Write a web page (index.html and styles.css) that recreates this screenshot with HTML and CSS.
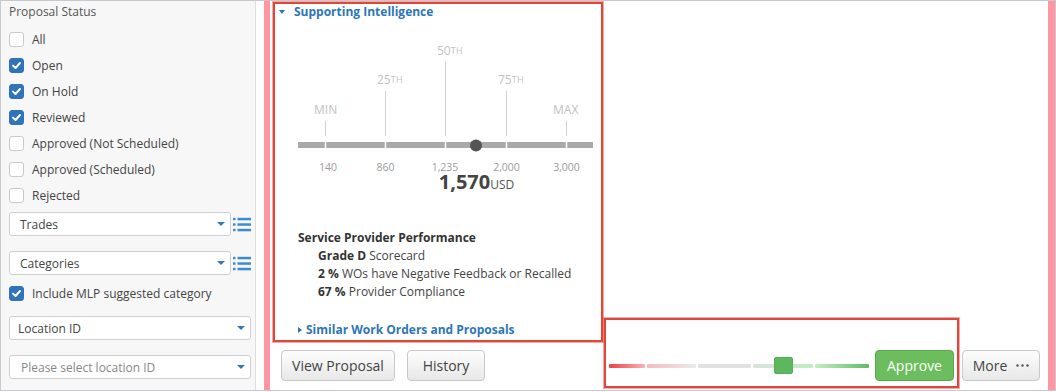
FILE: index.html
```html
<!DOCTYPE html>
<html lang="en">
<head>
  <meta charset="UTF-8">
  <meta name="viewport" content="width=device-width, initial-scale=1.0">
  <title>Proposal Review</title>
  <link rel="stylesheet" href="styles.css">
</head>
<body>
  <div class="frame">
    <aside class="sidebar">
      <div class="filter-title">Proposal Status</div>
      <ul class="check-list">
        <li class="check-row"><span class="box"></span>All</li>
        <li class="check-row"><span class="box checked"><svg viewBox="0 0 11 11"><path d="M2 5.6 4.5 8 9 3"/></svg></span>Open</li>
        <li class="check-row"><span class="box checked"><svg viewBox="0 0 11 11"><path d="M2 5.6 4.5 8 9 3"/></svg></span>On Hold</li>
        <li class="check-row"><span class="box checked"><svg viewBox="0 0 11 11"><path d="M2 5.6 4.5 8 9 3"/></svg></span>Reviewed</li>
        <li class="check-row"><span class="box"></span>Approved (Not Scheduled)</li>
        <li class="check-row"><span class="box"></span>Approved (Scheduled)</li>
        <li class="check-row"><span class="box"></span>Rejected</li>
      </ul>

      <div class="select-row first">
        <div class="select"><span>Trades</span><i class="caret"></i></div>
        <svg class="list-icon" viewBox="0 0 18 15">
          <rect x="0" y="0.8" width="2.5" height="2.5" rx="0.6"/><rect x="4.5" y="0.8" width="13.5" height="2.5"/>
          <rect x="0" y="6.3" width="2.5" height="2.5" rx="0.6"/><rect x="4.5" y="6.3" width="13.5" height="2.5"/>
          <rect x="0" y="11.8" width="2.5" height="2.5" rx="0.6"/><rect x="4.5" y="11.8" width="13.5" height="2.5"/>
        </svg>
      </div>
      <div class="select-row">
        <div class="select"><span>Categories</span><i class="caret"></i></div>
        <svg class="list-icon" viewBox="0 0 18 15">
          <rect x="0" y="0.8" width="2.5" height="2.5" rx="0.6"/><rect x="4.5" y="0.8" width="13.5" height="2.5"/>
          <rect x="0" y="6.3" width="2.5" height="2.5" rx="0.6"/><rect x="4.5" y="6.3" width="13.5" height="2.5"/>
          <rect x="0" y="11.8" width="2.5" height="2.5" rx="0.6"/><rect x="4.5" y="11.8" width="13.5" height="2.5"/>
        </svg>
      </div>
      <div class="check-row mlp"><span class="box checked"><svg viewBox="0 0 11 11"><path d="M2 5.6 4.5 8 9 3"/></svg></span>Include MLP suggested category</div>

      <div class="select wide"><span>Location ID</span><i class="caret"></i></div>
      <div class="select wide placeholder"><span>Please select location ID</span><i class="caret"></i></div>
    </aside>

    <main class="panel">
      <section class="intel">
        <div class="section-head open"><i class="tri-down"></i>Supporting Intelligence</div>

        <svg class="chart" viewBox="0 0 327 175">
          <g stroke="#d0d0d0" stroke-width="1">
            <line x1="50.5" y1="101" x2="50.5" y2="116"/>
            <line x1="110.5" y1="71" x2="110.5" y2="116"/>
            <line x1="170.5" y1="41" x2="170.5" y2="116"/>
            <line x1="231.5" y1="71" x2="231.5" y2="116"/>
            <line x1="291.5" y1="101" x2="291.5" y2="116"/>
          </g>
          <g class="pct">
            <text x="39" y="94">MIN</text>
            <text x="102" y="64">25<tspan class="th" dy="-1">TH</tspan></text>
            <text x="162" y="34.5">50<tspan class="th" dy="-1">TH</tspan></text>
            <text x="223" y="64">75<tspan class="th" dy="-1">TH</tspan></text>
            <text x="278" y="94">MAX</text>
          </g>
          <rect x="23" y="122" width="295" height="6" fill="#a9a9a9"/>
          <g stroke="#fff" stroke-width="1.5">
            <line x1="50.5" y1="122" x2="50.5" y2="128"/>
            <line x1="110.5" y1="122" x2="110.5" y2="128"/>
            <line x1="170.5" y1="122" x2="170.5" y2="128"/>
            <line x1="231.5" y1="122" x2="231.5" y2="128"/>
            <line x1="291.5" y1="122" x2="291.5" y2="128"/>
          </g>
          <circle cx="201" cy="125.5" r="6" fill="#555"/>
          <g class="vals">
            <text x="53" y="151">140</text>
            <text x="110.5" y="151">860</text>
            <text x="170" y="151">1,235</text>
            <text x="231.5" y="151">2,000</text>
            <text x="291.5" y="151">3,000</text>
          </g>
          <text class="amount" x="201.5" y="168.5"><tspan class="num">1,570</tspan><tspan class="cur">USD</tspan></text>
        </svg>

        <div class="perf">
          <div class="perf-title">Service Provider Performance</div>
          <ul>
            <li><b>Grade D</b> Scorecard</li>
            <li><b>2 %</b> WOs have Negative Feedback or Recalled</li>
            <li><b>67 %</b> Provider Compliance</li>
          </ul>
        </div>

        <div class="section-head closed"><i class="tri-right"></i>Similar Work Orders and Proposals</div>
      </section>

      <div class="actions">
        <button class="btn view">View Proposal</button>
        <button class="btn history">History</button>
        <div class="spacer"></div>
        <div class="rating">
          <span class="seg s1"></span>
          <span class="seg s2"></span>
          <span class="seg s3"></span>
          <span class="seg s4"></span>
          <span class="seg s5"></span>
          <span class="thumb"></span>
        </div>
        <button class="btn approve">Approve</button>
        <button class="btn more">More
          <svg class="dots" viewBox="0 0 13 3"><circle cx="1.5" cy="1.5" r="1.2"/><circle cx="6.5" cy="1.5" r="1.2"/><circle cx="11.5" cy="1.5" r="1.2"/></svg>
        </button>
      </div>

      <div class="highlight"></div>
    </main>
  </div>
</body>
</html>
```

FILE: styles.css
```css
* {
  box-sizing: border-box;
}
body {
  margin: 0;
  font-family: "Open Sans", "Liberation Sans", sans-serif;
  background: #fff;
  color: #444;
}
.frame {
  display: flex;
  width: 1056px;
  height: 391px;
  border: 1px solid #c8c8d0;
}

/* sidebar filters */
.sidebar {
  width: 255px;
  flex: none;
  background: #f7f7f7;
  border-right: 1px solid #dedede;
  padding: 1px 4px 0 8px;
  font-size: 12px;
}
.filter-title {
  line-height: 20px;
  color: #555;
}
.check-list {
  list-style: none;
  margin: 4px 0 0;
  padding: 0;
}
.check-row {
  display: flex;
  align-items: center;
  gap: 8px;
  height: 26px;
  color: #444;
}
.check-row.mlp {
  margin-top: 5px;
}
.box {
  width: 15px;
  height: 15px;
  flex: none;
  display: flex;
  align-items: center;
  justify-content: center;
  background: #fff;
  border: 1px solid #c9c9c9;
  border-radius: 3px;
}
.box.checked {
  background: #2f74ba;
  border-color: #2f74ba;
}
.box svg {
  width: 11px;
  height: 11px;
  fill: none;
  stroke: #fff;
  stroke-width: 2;
  stroke-linecap: round;
  stroke-linejoin: round;
}
.select-row {
  display: flex;
  align-items: center;
  gap: 2px;
  margin-top: 15px;
}
.select-row.first {
  margin-top: 4px;
}
.select {
  display: flex;
  align-items: center;
  justify-content: space-between;
  width: 222px;
  height: 24px;
  padding: 0 5px 0 10px;
  background: #fff;
  border: 1px solid #cfcfcf;
  border-radius: 3px;
  color: #444;
}
.select.wide {
  width: 242px;
  margin-top: 10px;
  padding-left: 8px;
}
.select.placeholder {
  margin-top: 15px;
  padding-left: 11px;
  color: #888;
}
.caret {
  width: 0;
  height: 0;
  border-left: 4px solid transparent;
  border-right: 4px solid transparent;
  border-top: 4px solid #3479bd;
}
.list-icon {
  width: 18px;
  height: 15px;
  fill: #3c8ad3;
}

/* main panel */
.panel {
  flex: 1;
  position: relative;
  display: flex;
  flex-direction: column;
  margin-left: 8px;
  border-left: 6px solid #fe97a1;
  border-right: 7px solid #fe97a1;
}
.intel {
  width: 330px;
  height: 340px;
  margin: 1px 0 0 3px;
  border: 2px solid #e2463b;
  box-shadow: 0 0 0 1px rgba(226, 70, 59, 0.45);
}
.section-head {
  display: flex;
  align-items: center;
  font-size: 12px;
  font-weight: 700;
  line-height: 16px;
  color: #2d76ba;
}
.section-head.open {
  gap: 9px;
  padding-left: 4px;
}
.section-head.closed {
  gap: 4px;
  margin-top: 21px;
  padding-left: 23px;
}
.tri-down {
  border-left: 3.5px solid transparent;
  border-right: 3.5px solid transparent;
  border-top: 4px solid #2d76ba;
}
.tri-right {
  border-top: 3.5px solid transparent;
  border-bottom: 3.5px solid transparent;
  border-left: 4px solid #2d76ba;
}
.chart {
  display: block;
  width: 327px;
  height: 175px;
}
.chart text {
  font-family: "Open Sans", sans-serif;
}
.chart .pct {
  fill: #c2c2c2;
  font-size: 12px;
}
.chart .th {
  font-size: 9px;
  letter-spacing: 0.4px;
}
.chart .vals {
  fill: #9b9b9b;
  font-size: 10.5px;
  text-anchor: middle;
}
.chart .amount {
  text-anchor: middle;
  fill: #444;
}
.chart .num {
  font-size: 20px;
  font-weight: 700;
}
.chart .cur {
  font-size: 12px;
  fill: #555;
}
.perf {
  margin-top: 34px;
  padding-left: 23px;
  font-size: 12px;
  line-height: 18px;
}
.perf-title {
  font-weight: 700;
  color: #333;
}
.perf ul {
  list-style: none;
  margin: 0;
  padding: 0 0 0 20px;
}
.perf b {
  color: #333;
}

/* action bar */
.actions {
  display: flex;
  align-items: center;
  height: 31px;
  margin-top: 8px;
  padding: 0 8px 0 11px;
}
.btn {
  height: 31px;
  padding: 0;
  border: 1px solid #c9c9c9;
  border-radius: 4px;
  background: linear-gradient(#fdfdfd, #e8e8e8);
  font: 14px "Open Sans", sans-serif;
  color: #444;
}
.btn.view {
  width: 114px;
}
.btn.history {
  width: 78px;
  margin-left: 12px;
}
.spacer {
  flex: 1;
}
.rating {
  position: relative;
  display: flex;
  align-items: center;
  gap: 2px;
  width: 260px;
  height: 17px;
  margin-right: 6px;
}
.seg {
  height: 4px;
  border-radius: 1px;
}
.s1 {
  width: 36px;
  background: linear-gradient(90deg, #ee4040, #f7b4b4);
}
.s2 {
  width: 49px;
  background: linear-gradient(90deg, #f6baba, #ececec);
}
.s3 {
  width: 53px;
  background: #e1e1e1;
}
.s4 {
  width: 60px;
  background: linear-gradient(90deg, #dde2dd, #bdefc2);
}
.s5 {
  width: 54px;
  background: linear-gradient(90deg, #c3efc7, #62b962);
}
.thumb {
  position: absolute;
  left: 165px;
  top: 0;
  width: 19px;
  height: 17px;
  background: #5cb85c;
  border: 1px solid #55b155;
  border-radius: 2px;
}
.btn.approve {
  width: 79px;
  background: #6cbd5d;
  border-color: #5ba94d;
  color: #fff;
}
.btn.more {
  width: 78px;
  margin-left: 8px;
  display: flex;
  align-items: center;
  justify-content: center;
  gap: 9px;
}
.dots {
  width: 13px;
  height: 3px;
  fill: #555;
}
.highlight {
  position: absolute;
  left: 334px;
  top: 317px;
  width: 355px;
  height: 70px;
  border: 2px solid #e2463b;
  box-shadow: 0 0 0 1px rgba(226, 70, 59, 0.45);
  pointer-events: none;
}
```
